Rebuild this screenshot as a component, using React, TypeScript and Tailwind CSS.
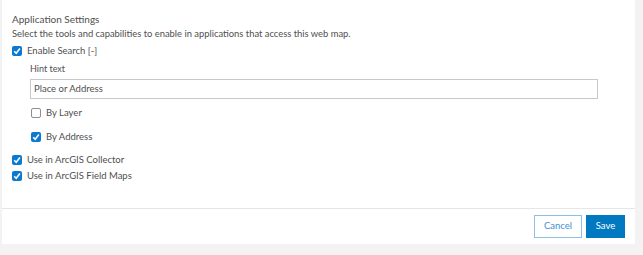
import React from 'react';

const Check = ({ checked }: { checked: boolean }) => (
  <span
    className={`inline-flex h-[10px] w-[10px] shrink-0 items-center justify-center rounded-[2px] ${
      checked ? 'bg-[#0a79cf]' : 'border border-[#8f8f8f] bg-white'
    }`}
  >
    {checked && (
      <svg viewBox="0 0 10 10" className="h-[10px] w-[10px]">
        <path d="M2.2 5.2 L4.2 7.3 L7.9 2.6" fill="none" stroke="white" strokeWidth="1.6" />
      </svg>
    )}
  </span>
);

const Option = ({ label, checked, className = '' }: { label: string; checked: boolean; className?: string }) => (
  <label className={`flex h-[12px] items-center gap-[5px] text-[9.5px] leading-[12px] text-[#4f4f4f] ${className}`}>
    <Check checked={checked} />
    <span>{label}</span>
  </label>
);

export default function App() {
  return (
    <div className="h-[255px] w-[643px] bg-[#f3f3f3] pb-[11px] pl-[2px] pr-[8px] font-['Lato',sans-serif]">
      <div className="flex h-full flex-col bg-white">
        <div className="h-[208px] pl-[10px] pt-[13px]">
          <div className="text-[10px] leading-[12px] text-[#4f4f4f]">Application Settings</div>
          <div className="mt-[3px] text-[9.4px] leading-[12px] text-[#4f4f4f]">
            Select the tools and capabilities to enable in applications that access this web map.
          </div>
          <Option className="mt-[5px]" label="Enable Search [-]" checked />
          <div className="pl-[18px]">
            <div className="mt-[6px] text-[9px] leading-[11px] text-[#4f4f4f]">Hint text</div>
            <div className="mt-[5px] flex h-[20px] w-[568px] items-center border border-[#c9c9c9] px-[3px] text-[9.5px] text-[#4f4f4f]">
              Place or Address
            </div>
            <Option className="mt-[8px] pl-[1px]" label="By Layer" checked={false} />
            <Option className="mt-[12px] pl-[1px]" label="By Address" checked />
          </div>
          <Option className="mt-[11px]" label="Use in ArcGIS Collector" checked />
          <Option className="mt-[4px]" label="Use in ArcGIS Field Maps" checked />
        </div>
        <div className="flex flex-1 items-center justify-end gap-[4px] border-t border-[#e6e6e6] pr-[10px]">
          <button className="h-[23px] w-[48px] border border-[#8cc0e6] bg-white text-[9.5px] text-[#3f8fd2]">Cancel</button>
          <button className="h-[23px] w-[39px] bg-[#0079c1] text-[9.5px] text-white">Save</button>
        </div>
      </div>
    </div>
  );
}
